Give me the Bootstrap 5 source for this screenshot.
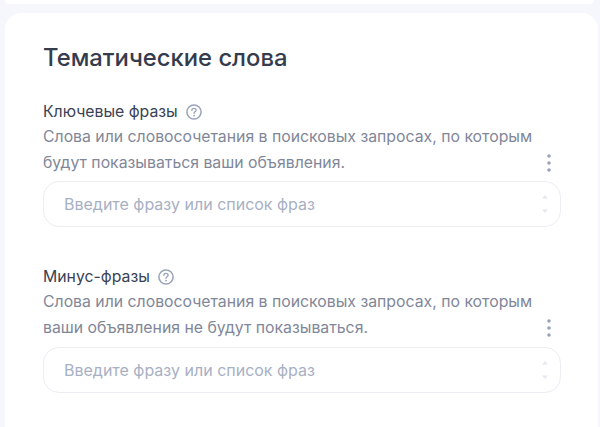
<!DOCTYPE html>
<html lang="ru">
<head>
    <meta charset="UTF-8">
    <meta name="viewport" content="width=device-width, initial-scale=1.0">
    <title>Тематические слова</title>
    <link href="https://cdn.jsdelivr.net/npm/bootstrap@5.3.3/dist/css/bootstrap.min.css" rel="stylesheet">
    <style>
        html, body { height: 100%; overflow: hidden; }
        body {
            background-color: #f5f7fc;
            font-family: "Inter", "Noto Sans", sans-serif;
            color: #3a4254;
        }
        .top-strip {
            height: 4px;
            margin: 0 6px 0 5px;
            background: #fff;
            border-radius: 0 0 12px 12px;
        }
        .panel {
            margin: 9px 2px 0 5px;
            height: 414px;
            padding: 30px 37px 0 38px;
            background: #fff;
            border-radius: 16px 16px 0 0;
        }
        .panel-title {
            font-size: 23.8px;
            font-weight: 500;
            line-height: 30px;
            color: #343c4e;
            margin: 0 0 29px;
        }
        .field-label {
            font-size: 15.8px;
            font-weight: 400;
            line-height: 20px;
            color: #3a4254;
        }
        .field-hint {
            font-size: 15.8px;
            line-height: 26px;
            margin-top: 2px;
            color: #7f8799;
            padding-right: 22px;
        }
        .dots {
            position: absolute;
            right: 10px;
            bottom: 4px;
            width: 4px;
            height: 18px;
        }
        .phrase-box {
            height: 46px;
            margin-top: 5px;
            padding: 0 12px 0 20px;
            border: 1px solid #ecedf5;
            border-radius: 16px;
            font-size: 16px;
            color: #a8b0c4;
        }
        .block-gap { margin-top: 40px; }
        .block-gap .phrase-box { margin-top: 6px; }
    </style>
</head>
<body>
    <div class="top-strip"></div>
    <div class="panel">
        <h2 class="panel-title">Тематические слова</h2>

        <div>
            <div class="field-label d-flex align-items-center gap-2">
                Ключевые фразы
                <svg width="16" height="16" viewBox="0 0 16 16" fill="none">
                    <circle cx="8" cy="8" r="7.1" stroke="#9aa3ba" stroke-width="1.5"/>
                    <path d="M5.9 6.3c0-1.2 1-1.9 2.1-1.9s2.1.7 2.1 1.8c0 1.5-2.1 1.6-2.1 3.1" stroke="#9aa3ba" stroke-width="1.4" stroke-linecap="round"/>
                    <circle cx="8" cy="11.6" r=".9" fill="#9aa3ba"/>
                </svg>
            </div>
            <div class="position-relative">
                <div class="field-hint">Слова или словосочетания в поисковых запросах, по которым будут показываться ваши объявления.</div>
                <svg class="dots" viewBox="0 0 4 18"><circle cx="2" cy="2" r="1.8" fill="#9aa3ba"/><circle cx="2" cy="9" r="1.8" fill="#9aa3ba"/><circle cx="2" cy="16" r="1.8" fill="#9aa3ba"/></svg>
            </div>
            <div class="phrase-box d-flex align-items-center justify-content-between">
                <span>Введите фразу или список фраз</span>
                <svg width="6" height="18" viewBox="0 0 6 18"><path d="M0 3.5 3 0l3 3.5zM0 14.5 3 18l3-3.5z" fill="#e6e8f0"/></svg>
            </div>
        </div>

        <div class="block-gap">
            <div class="field-label d-flex align-items-center gap-2">
                Минус-фразы
                <svg width="16" height="16" viewBox="0 0 16 16" fill="none">
                    <circle cx="8" cy="8" r="7.1" stroke="#9aa3ba" stroke-width="1.5"/>
                    <path d="M5.9 6.3c0-1.2 1-1.9 2.1-1.9s2.1.7 2.1 1.8c0 1.5-2.1 1.6-2.1 3.1" stroke="#9aa3ba" stroke-width="1.4" stroke-linecap="round"/>
                    <circle cx="8" cy="11.6" r=".9" fill="#9aa3ba"/>
                </svg>
            </div>
            <div class="position-relative">
                <div class="field-hint">Слова или словосочетания в поисковых запросах, по которым ваши объявления не будут показываться.</div>
                <svg class="dots" viewBox="0 0 4 18"><circle cx="2" cy="2" r="1.8" fill="#9aa3ba"/><circle cx="2" cy="9" r="1.8" fill="#9aa3ba"/><circle cx="2" cy="16" r="1.8" fill="#9aa3ba"/></svg>
            </div>
            <div class="phrase-box d-flex align-items-center justify-content-between">
                <span>Введите фразу или список фраз</span>
                <svg width="6" height="18" viewBox="0 0 6 18"><path d="M0 3.5 3 0l3 3.5zM0 14.5 3 18l3-3.5z" fill="#e6e8f0"/></svg>
            </div>
        </div>
    </div>
    <script src="https://cdn.jsdelivr.net/npm/bootstrap@5.3.3/dist/js/bootstrap.bundle.min.js"></script>
</body>
</html>
